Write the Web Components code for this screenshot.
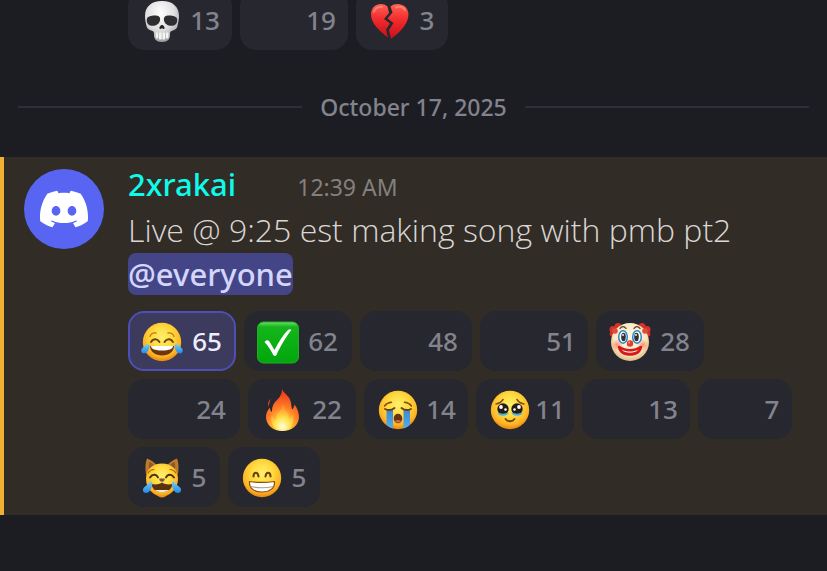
<!DOCTYPE html>
<html lang="en">
<head>
<meta charset="utf-8">
<meta name="viewport" content="width=device-width, initial-scale=1">
<title>announcements</title>
<style>
    body {
        margin: 0;
        min-height: 100vh;
        background: #1c1d23;
        font-family: "Noto Sans", "Open Sans", sans-serif;
        overflow-x: hidden;
    }
</style>
</head>
<body>
<chat-log>
    <reaction-list slot="previous">
        <reaction-chip emoji="skull" count="13" size="104"></reaction-chip>
        <reaction-chip count="19" size="108"></reaction-chip>
        <reaction-chip emoji="heart" count="3" size="92"></reaction-chip>
    </reaction-list>
    <date-divider>October 17, 2025</date-divider>
    <chat-message>
        <span slot="name">2xrakai</span>
        <span slot="time">12:39 AM</span>
        Live @ 9:25 est making song with pmb pt2 <user-mention>@everyone</user-mention>
        <reaction-list slot="reactions">
            <reaction-chip emoji="joy" count="65" size="108" selected></reaction-chip>
            <reaction-chip emoji="check" count="62" size="108"></reaction-chip>
            <reaction-chip count="48" size="112"></reaction-chip>
            <reaction-chip count="51" size="108"></reaction-chip>
            <reaction-chip emoji="clown" count="28" size="108"></reaction-chip>
            <reaction-chip count="24" size="112"></reaction-chip>
            <reaction-chip emoji="fire" count="22" size="108"></reaction-chip>
            <reaction-chip emoji="sob" count="14" size="104"></reaction-chip>
            <reaction-chip emoji="pleading" count="11" size="98"></reaction-chip>
            <reaction-chip count="13" size="108"></reaction-chip>
            <reaction-chip count="7" size="94"></reaction-chip>
            <reaction-chip emoji="cat" count="5" size="92"></reaction-chip>
            <reaction-chip emoji="grin" count="5" size="92"></reaction-chip>
        </reaction-list>
    </chat-message>
</chat-log>

<script>
// every round yellow face starts from these two pieces
const faceDefs = `
    <defs>
        <radialGradient id="face" cx="50%" cy="38%" r="63%">
            <stop offset="0" stop-color="#fff06e"/>
            <stop offset=".45" stop-color="#ffdb3f"/>
            <stop offset=".8" stop-color="#fdb424"/>
            <stop offset="1" stop-color="#e4810f"/>
        </radialGradient>
        <linearGradient id="tear" x1="0" y1="0" x2="0" y2="1">
            <stop offset="0" stop-color="#7dcdf8"/>
            <stop offset="1" stop-color="#1c8be8"/>
        </linearGradient>
        <linearGradient id="stream" x1="0" y1="0" x2="0" y2="1">
            <stop offset="0" stop-color="#3b86cf"/>
            <stop offset="1" stop-color="#52aef0"/>
        </linearGradient>
    </defs>`;
const face = faceDefs + `<circle cx="20" cy="21" r="19.2" fill="url(#face)"/>`;

const emojis = {
    skull: `
        <defs><radialGradient id="bone" cx="45%" cy="30%" r="70%">
            <stop offset="0" stop-color="#fff"/><stop offset=".6" stop-color="#dededf"/><stop offset="1" stop-color="#9b9b9e"/>
        </radialGradient></defs>
        <path d="M20 1C9 1 3 7 3 16c0 5 1 7 1.500 10 .5 3 3 4 6 5 1.500.6 1.500 2 1.500 4 0 4 2 7 8 7s8-3 8-7c0-2 0-3.400 1.500-4 3-1 5.500-2 6-5C36 23 37 21 37 16 37 7 31 1 20 1z" fill="url(#bone)"/>
        <path d="M5 18.500c1-3 10-4 12.500-1.500 1.500 2 .5 8-5.500 8.800C6 26.500 4 22 5 18.500zM35 18.500c-1-3-10-4-12.500-1.500-1.500 2-.5 8 5.500 8.800 6 .7 8-3.800 7-7.300z" fill="#2e2e30"/>
        <path d="M20 25c-1.500 0-3 2.500-2.500 3.500.6.9 1.900.4 2.500-.5.6.9 1.900 1.400 2.500.5C23 27.500 21.500 25 20 25z" fill="#252526"/>
        <path d="M13 33h14v6H13z" fill="#99999c"/>
        <g fill="#f5f5f5"><rect x="13.500" y="32.500" width="2.800" height="6" rx="1"/><rect x="16.800" y="32.500" width="3" height="7" rx="1"/><rect x="20.300" y="32.500" width="3" height="7" rx="1"/><rect x="23.800" y="32.500" width="2.800" height="6" rx="1"/></g>`,
    heart: `
        <defs><linearGradient id="red" x1="0" y1="0" x2="0" y2="1">
            <stop offset="0" stop-color="#ff6254"/><stop offset=".45" stop-color="#f22b2e"/><stop offset="1" stop-color="#c51018"/>
        </linearGradient></defs>
        <path d="M17.500 6.500C12 1.500 1 4 1 14.500 1 23 9 31 18 37.500l-2-8 4-6-6-4.500 5-6z" fill="url(#red)"/>
        <path d="M20.500 6.500C26 1.500 38.500 4 38.500 14.500c0 9-8 17.500-17.500 24.500l-2-9 4.500-7-6-4.500 5-6z" fill="url(#red)"/>
        <path d="M4 12c1-4 4-5.500 8-5M26 7.500c4-1.500 7-.5 9 2.500" fill="none" stroke="#ff9c8c" stroke-width="2" stroke-linecap="round" opacity=".6"/>`,
    joy: face + `
        <path d="M8 15.500c1-2.500 3.500-4 6-3.500M32 15.500c-1-2.500-3.500-4-6-3.500" fill="none" stroke="#c9780c" stroke-width="1.300" stroke-linecap="round"/>
        <path d="M9 21c2.500-4 6.500-3.500 8.500 0M22.500 21c2-3.500 6-4 8.500 0" fill="none" stroke="#70400a" stroke-width="1.900" stroke-linecap="round"/>
        <path d="M8 25h24c0 5.500-5 9.500-12 9.500S8 30.500 8 25z" fill="#70350c"/>
        <path d="M9 25h22c0 3-4 4.500-11 4.500S9 28 9 25z" fill="#fff"/>
        <path d="M5 23c1.500-.5 3 1 2.500 3-.5 3-3 6.500-5.500 6.500S-1.500 29.500 0 27.500C1.500 26 3 25 5 23zM35 23c-1.500-.5-3 1-2.500 3 .5 3 3 6.500 5.500 6.500s3.500-3 2-5c-1.500-1.500-3-2.500-5-4.500z" fill="url(#tear)"/>`,
    check: `
        <defs><linearGradient id="green" x1="0" y1="0" x2="0" y2="1">
            <stop offset="0" stop-color="#6fe06c"/><stop offset=".12" stop-color="#16b51c"/><stop offset="1" stop-color="#00a70c"/>
        </linearGradient></defs>
        <rect x="-.5" y="1" width="41" height="41" rx="6" fill="url(#green)" stroke="#1fae24"/>
        <path d="M6.500 21c2-2.500 4-2.500 5.500.5l4.500 7.500c4-8 8.500-15 13.500-20 1-1 2.500-1 3.500-.2C28 16 22 26 18.500 34c-.6 1.300-2.400 1.300-3.200 0-2.500-5-5-9-8.800-13z" fill="#fff"/>`,
    clown: `
        <defs><radialGradient id="pale" cx="50%" cy="42%" r="60%">
            <stop offset="0" stop-color="#fffbe8"/><stop offset=".7" stop-color="#fbe9c4"/><stop offset="1" stop-color="#d8b27a"/>
        </radialGradient>
        <radialGradient id="blush"><stop offset="0" stop-color="#ff6b4c" stop-opacity=".75"/><stop offset="1" stop-color="#ff8a62" stop-opacity="0"/></radialGradient></defs>
        <g fill="#d5322c"><circle cx="2.500" cy="13" r="2.800"/><circle cx="3" cy="8.500" r="3.500"/><circle cx="8" cy="5.500" r="3.500"/><circle cx="37.500" cy="13" r="2.800"/><circle cx="37" cy="8.500" r="3.500"/><circle cx="32" cy="5.500" r="3.500"/></g>
        <circle cx="20" cy="21" r="19" fill="url(#pale)"/>
        <circle cx="5" cy="10" r="2.800" fill="#e24a3d"/><circle cx="35" cy="10" r="2.800" fill="#e24a3d"/>
        <circle cx="7" cy="24" r="6" fill="url(#blush)"/><circle cx="33" cy="24" r="6" fill="url(#blush)"/>
        <path d="M10 7.500c1.500-2.500 4.500-2.500 6 0M24 7.500c1.500-2.500 4.500-2.500 6 0" fill="none" stroke="#65422b" stroke-width="1.400" stroke-linecap="round"/>
        <g fill="#fff" stroke="#2886c7" stroke-width="1.500"><ellipse cx="13" cy="16" rx="4.300" ry="6.200"/><ellipse cx="27" cy="16" rx="4.300" ry="6.200"/></g>
        <ellipse cx="13.500" cy="16" rx="2.300" ry="4.200" fill="#303233"/><ellipse cx="26.500" cy="16" rx="2.300" ry="4.200" fill="#303233"/>
        <circle cx="13" cy="14" r=".9" fill="#fff"/><circle cx="26" cy="14" r=".9" fill="#fff"/>
        <path d="M8 27c-1-1.500.5-3 2-2 6 4 14 4 20 0 1.500-1 3 .5 2 2-1.500 5.500-6 7.800-12 7.800S9.500 32.500 8 27z" fill="#d8191c"/>
        <path d="M11.500 28.500c5.500 2.700 11.500 2.700 17 0-2.500 2.700-5 3.200-8.500 3.200s-6-.5-8.500-3.200z" fill="#fff1df"/>
        <circle cx="20" cy="22.500" r="3.200" fill="#e63a2b"/><circle cx="19.200" cy="21.500" r="1" fill="#ff9c7f"/>`,
    fire: `
        <defs><radialGradient id="flame" cx="50%" cy="92%" r="85%">
            <stop offset="0" stop-color="#fff9a8"/><stop offset=".3" stop-color="#ffc337"/><stop offset=".6" stop-color="#ff7a26"/><stop offset="1" stop-color="#f0391d"/>
        </radialGradient>
        <radialGradient id="core" cx="50%" cy="85%" r="70%">
            <stop offset="0" stop-color="#fffde0"/><stop offset=".5" stop-color="#ffe34d"/><stop offset="1" stop-color="#ff9c2c"/>
        </radialGradient></defs>
        <path d="M20 0c1 3 5 5.500 7.500 9.500 2 3.500 1.500 7 2.500 11 1.500-.5 2-3 2.500-5 3 4 4.500 8.500 4.500 12.500C37 36 30 42 20.500 42S4 36 4 28c0-4 1.500-7 4-9.500 0 2 .5 3.500 2 4.500 0-5 1-8 4.500-11.500C18 8 20 5 20 0z" fill="url(#flame)"/>
        <path d="M9 10c-3 2-3.500 5-2 7.500C7 14.500 7.500 12.500 9 10z" fill="#f04a22"/>
        <path d="M21.500 16c.5 5 6 8 6 13 2-.5 2.500-2 3-3.500 3 8-1 16-10 16S7.500 33.500 10 26.500c1 2.500 2.500 4 4 4.500C13 24 20 22 21.500 16z" fill="url(#core)"/>`,
    sob: face + `
        <path d="M6.500 17c1.500-2 4-3.500 7-3.700M33.500 17c-1.500-2-4-3.500-7-3.700" fill="none" stroke="#8b4c0a" stroke-width="1.500" stroke-linecap="round"/>
        <path d="M8.500 20H15v19.500c-2.500-.8-4.500-2-6.500-3.700zM25.500 20H32v15.800c-2 1.700-4 2.900-6.500 3.700z" fill="url(#stream)"/>
        <path d="M7 20c3 1.500 7 1 9.500-1M33 20c-3 1.500-7 1-9.500-1" fill="none" stroke="#70400a" stroke-width="1.900" stroke-linecap="round"/>
        <ellipse cx="20" cy="29.500" rx="4.200" ry="4.800" fill="#69330d"/>
        <path d="M17 32c1.500-1.500 4.500-1.500 6 0-1 2.300-5 2.300-6 0z" fill="#d66c43"/>`,
    pleading: face + `
        <path d="M6 15c3-.5 5.500-2 7-4.500M34 15c-3-.5-5.500-2-7-4.500" fill="none" stroke="#8b4c0a" stroke-width="1.500" stroke-linecap="round"/>
        <circle cx="13" cy="20" r="5.700" fill="#261b15"/><circle cx="27" cy="20" r="5.700" fill="#261b15"/>
        <path d="M7.500 23.500c3 1.500 8 1.500 11 0 0 2-2 3.200-5.500 3.200s-5.500-1.200-5.500-3.200zM21.500 23.500c3 1.500 8 1.500 11 0 0 2-2 3.200-5.500 3.200s-5.500-1.200-5.500-3.200z" fill="#4fb6dd"/>
        <g fill="#fff"><circle cx="11" cy="18" r="1.900"/><circle cx="15.500" cy="20.500" r="1.300"/><circle cx="29" cy="18" r="1.900"/><circle cx="24.500" cy="20.500" r="1.300"/></g>
        <path d="M15.500 30c2 3 7 3 9 0" fill="none" stroke="#70400a" stroke-width="1.800" stroke-linecap="round"/>`,
    cat: faceDefs + `
        <path d="M4 17C3 11 3.500 5 5 1.500 9 3 12 5 14 7.500h12C28 5 31 3 35 1.500 36.500 5 37 11 36 17z" fill="#bd7c2a"/>
        <path d="M7 12c-.5-3 0-5 .5-7 2.500 1 4 2.500 5 4zM33 12c.5-3 0-5-.5-7-2.500 1-4 2.500-5 4z" fill="#8d5833"/>
        <path d="M20 6.500C11 6.500 4 12 4 21.500c0 8 4 13 9 16 3 1.500 4.500 3 7 3s4-1.500 7-3c5-3 9-8 9-16 0-9.500-7-15-16-15z" fill="url(#face)"/>
        <path d="M6 16c1.500-2 3.500-3.500 6-3.500M34 16c-1.500-2-3.500-3.500-6-3.500" fill="none" stroke="#a9690e" stroke-width="1.200" stroke-linecap="round"/>
        <path d="M8 20.500c2.500-4 6.500-3.500 8 0M24 20.500c1.500-3.500 5.500-4 8 0" fill="none" stroke="#50300d" stroke-width="1.900" stroke-linecap="round"/>
        <path d="M9.500 27c4 .8 7 .6 10.500-1.500 3.500 2.100 6.500 2.300 10.500 1.500-.5 5-4.500 8-10.500 8S10 32 9.500 27z" fill="#5b3112"/>
        <path d="M13 33h14c-2 1.500-4 2-7 2s-5-.5-7-2z" fill="#f4ead9"/>
        <path d="M17.500 21.500h5c.8 1.500-1 3.300-2.500 3.300s-3.300-1.800-2.500-3.300z" fill="#81563a"/>
        <path d="M8.500 24c1.500.5 2 2.500 1.500 4.500-.8 4-3 7.500-6 7.500s-4-3.500-2-5.500c1.800-1.800 4-3 6.500-6.500zM31.500 24c-1.500.5-2 2.500-1.500 4.500.8 4 3 7.500 6 7.500s4-3.500 2-5.500c-1.800-1.800-4-3-6.500-6.500z" fill="url(#tear)"/>`,
    grin: face + `
        <path d="M11.500 19.500c0-5 4.500-5 5 0M23.500 19.500c.5-5 5-5 5 0" fill="none" stroke="#70400a" stroke-width="2.100" stroke-linecap="round"/>
        <path d="M7.500 24.500c8 1.200 17 1.200 25 0 .5 7-5 10.500-12.500 10.500S7 31.500 7.500 24.500z" fill="#fff" stroke="#8b4c0a" stroke-width="1.200" stroke-linejoin="round"/>
        <path d="M8.500 29.500c7 1.500 16 1.500 23 0" fill="none" stroke="#a6a19a" stroke-width="1.100"/>`
};

class ReactionChip extends HTMLElement {
    constructor() {
        super();
        this.shadow = this.attachShadow({ mode: "open" });
    }

    connectedCallback() {
        const emoji = this.getAttribute("emoji");
        const count = this.getAttribute("count");
        const selected = this.hasAttribute("selected");
        const picture = emoji
            ? `<svg class="emoji" viewBox="0 0 40 40" aria-hidden="true">${emojis[emoji]}</svg>`
            : `<span class="emoji custom"></span>`;

        this.shadow.innerHTML = `
        <style>
            :host {
                display: block;
                flex: 0 0 ${this.getAttribute("size")}px;
            }

            button {
                box-sizing: border-box;
                display: flex;
                align-items: center;
                width: 100%;
                height: 60px;
                padding: 0 2px 0 12px;
                border: 2px solid transparent;
                border-radius: 16px;
                background: #27272f;
                color: #83838d;
                font: 500 26px/32px "Noto Sans", "Open Sans", sans-serif;
                cursor: pointer;
            }

            button[aria-pressed="true"] {
                background: #3c3a5d;
                border-color: #4d4fb5;
                color: #eeeefa;
            }

            .emoji {
                flex: none;
                width: 40px;
                height: 40px;
                overflow: visible;
            }

            .custom {
                width: 44px;
            }

            .count {
                flex: 1;
                text-align: center;
            }
        </style>
        <button type="button" aria-pressed="${selected}">${picture}<span class="count">${count}</span></button>
        `;
    }
}

class ReactionList extends HTMLElement {
    constructor() {
        super();
        this.shadow = this.attachShadow({ mode: "open" });
        this.shadow.innerHTML = `
        <style>
            :host {
                display: flex;
                flex-wrap: wrap;
                gap: 8px;
            }
        </style>
        <slot></slot>
        `;
    }
}

class DateDivider extends HTMLElement {
    constructor() {
        super();
        this.shadow = this.attachShadow({ mode: "open" });
        this.shadow.innerHTML = `
        <style>
            :host {
                display: flex;
                align-items: center;
                gap: 18px;
                margin: 41px 18px 34px;
                color: #83838d;
                font-size: 23px;
                font-weight: 500;
                line-height: 32px;
            }

            :host::before,
            :host::after {
                content: "";
                flex: 1;
                height: 2px;
                background: #2e2f36;
            }
        </style>
        <span><slot></slot></span>
        `;
    }
}

class UserMention extends HTMLElement {
    constructor() {
        super();
        this.shadow = this.attachShadow({ mode: "open" });
        this.shadow.innerHTML = `
        <style>
            :host {
                display: inline;
                border-radius: 8px;
                background: #444586;
                color: #d3d5fb;
                font-family: "Noto Sans", sans-serif;
                font-size: 31px;
                font-weight: 500;
            }
        </style>
        <slot></slot>
        `;
    }
}

class ChatMessage extends HTMLElement {
    constructor() {
        super();
        this.shadow = this.attachShadow({ mode: "open" });
        this.shadow.innerHTML = `
        <style>
            :host {
                display: flex;
                gap: 24px;
                padding: 6px 18px 8px 20px;
                border-left: 4px solid #f0b132;
                background: #312c26;
            }

            .avatar {
                flex: none;
                display: grid;
                place-items: center;
                width: 80px;
                height: 80px;
                margin-top: 6px;
                border-radius: 50%;
                background: #5865f2;
            }

            .avatar svg {
                width: 48px;
                height: 48px;
                fill: #fff;
            }

            .content {
                flex: 1;
                min-width: 0;
            }

            header {
                display: flex;
                align-items: baseline;
                gap: 61px;
                line-height: 42px;
            }

            .name {
                color: #0ffbe9;
                font-size: 31px;
                font-weight: 500;
            }

            .time {
                color: #83807f;
                font-size: 23px;
            }

            .text {
                margin: 0 0 15px;
                color: #dad6d4;
                font-family: "Open Sans", "Noto Sans", sans-serif;
                font-size: 32px;
                font-weight: 300;
                line-height: 44px;
            }
        </style>
        <div class="avatar">
            <svg viewBox="0 0 24 24" aria-hidden="true"><path d="M20.317 4.3698a19.7913 19.7913 0 00-4.8851-1.5152.0741.0741 0 00-.0785.0371c-.211.3753-.4447.8648-.6083 1.2495-1.8447-.2762-3.68-.2762-5.4868 0-.1636-.3933-.4058-.8742-.6177-1.2495a.077.077 0 00-.0785-.037 19.7363 19.7363 0 00-4.8852 1.515.0699.0699 0 00-.0321.0277C.5334 9.0458-.319 13.5799.0992 18.0578a.0824.0824 0 00.0312.0561c2.0528 1.5076 4.0413 2.4228 5.9929 3.0294a.0777.0777 0 00.0842-.0276c.4616-.6304.8731-1.2952 1.226-1.9942a.076.076 0 00-.0416-.1057c-.6528-.2476-1.2743-.5495-1.8722-.8923a.077.077 0 01-.0076-.1277c.1258-.0943.2517-.1923.3718-.2914a.0743.0743 0 01.0776-.0105c3.9278 1.7933 8.18 1.7933 12.0614 0a.0739.0739 0 01.0785.0095c.1202.099.246.1981.3728.2924a.077.077 0 01-.0066.1276 12.2986 12.2986 0 01-1.873.8914.0766.0766 0 00-.0407.1067c.3604.698.7719 1.3628 1.225 1.9932a.076.076 0 00.0842.0286c1.961-.6067 3.9495-1.5219 6.0023-3.0294a.077.077 0 00.0313-.0552c.5004-5.177-.8382-9.6739-3.5485-13.6604a.061.061 0 00-.0312-.0286zM8.02 15.3312c-1.1825 0-2.1569-1.0857-2.1569-2.419 0-1.3332.9555-2.4189 2.157-2.4189 1.2108 0 2.1757 1.0952 2.1568 2.419 0 1.3332-.9555 2.4189-2.1569 2.4189zm7.9748 0c-1.1825 0-2.1569-1.0857-2.1569-2.419 0-1.3332.9554-2.4189 2.1569-2.4189 1.2108 0 2.1757 1.0952 2.1568 2.419 0 1.3332-.946 2.4189-2.1568 2.4189Z"/></svg>
        </div>
        <div class="content">
            <header>
                <span class="name"><slot name="name"></slot></span>
                <span class="time"><slot name="time"></slot></span>
            </header>
            <p class="text"><slot></slot></p>
            <slot name="reactions"></slot>
        </div>
        `;
    }
}

class ChatLog extends HTMLElement {
    constructor() {
        super();
        this.shadow = this.attachShadow({ mode: "open" });
        this.shadow.innerHTML = `
        <style>
            :host {
                display: flow-root;
                overflow: hidden;
            }

            /* the older message is scrolled partly out of view */
            .previous {
                margin: -10px 18px 0 128px;
            }
        </style>
        <div class="previous"><slot name="previous"></slot></div>
        <slot></slot>
        `;
    }
}

window.customElements.define("reaction-chip", ReactionChip);
window.customElements.define("reaction-list", ReactionList);
window.customElements.define("date-divider", DateDivider);
window.customElements.define("user-mention", UserMention);
window.customElements.define("chat-message", ChatMessage);
window.customElements.define("chat-log", ChatLog);
</script>
</body>
</html>
